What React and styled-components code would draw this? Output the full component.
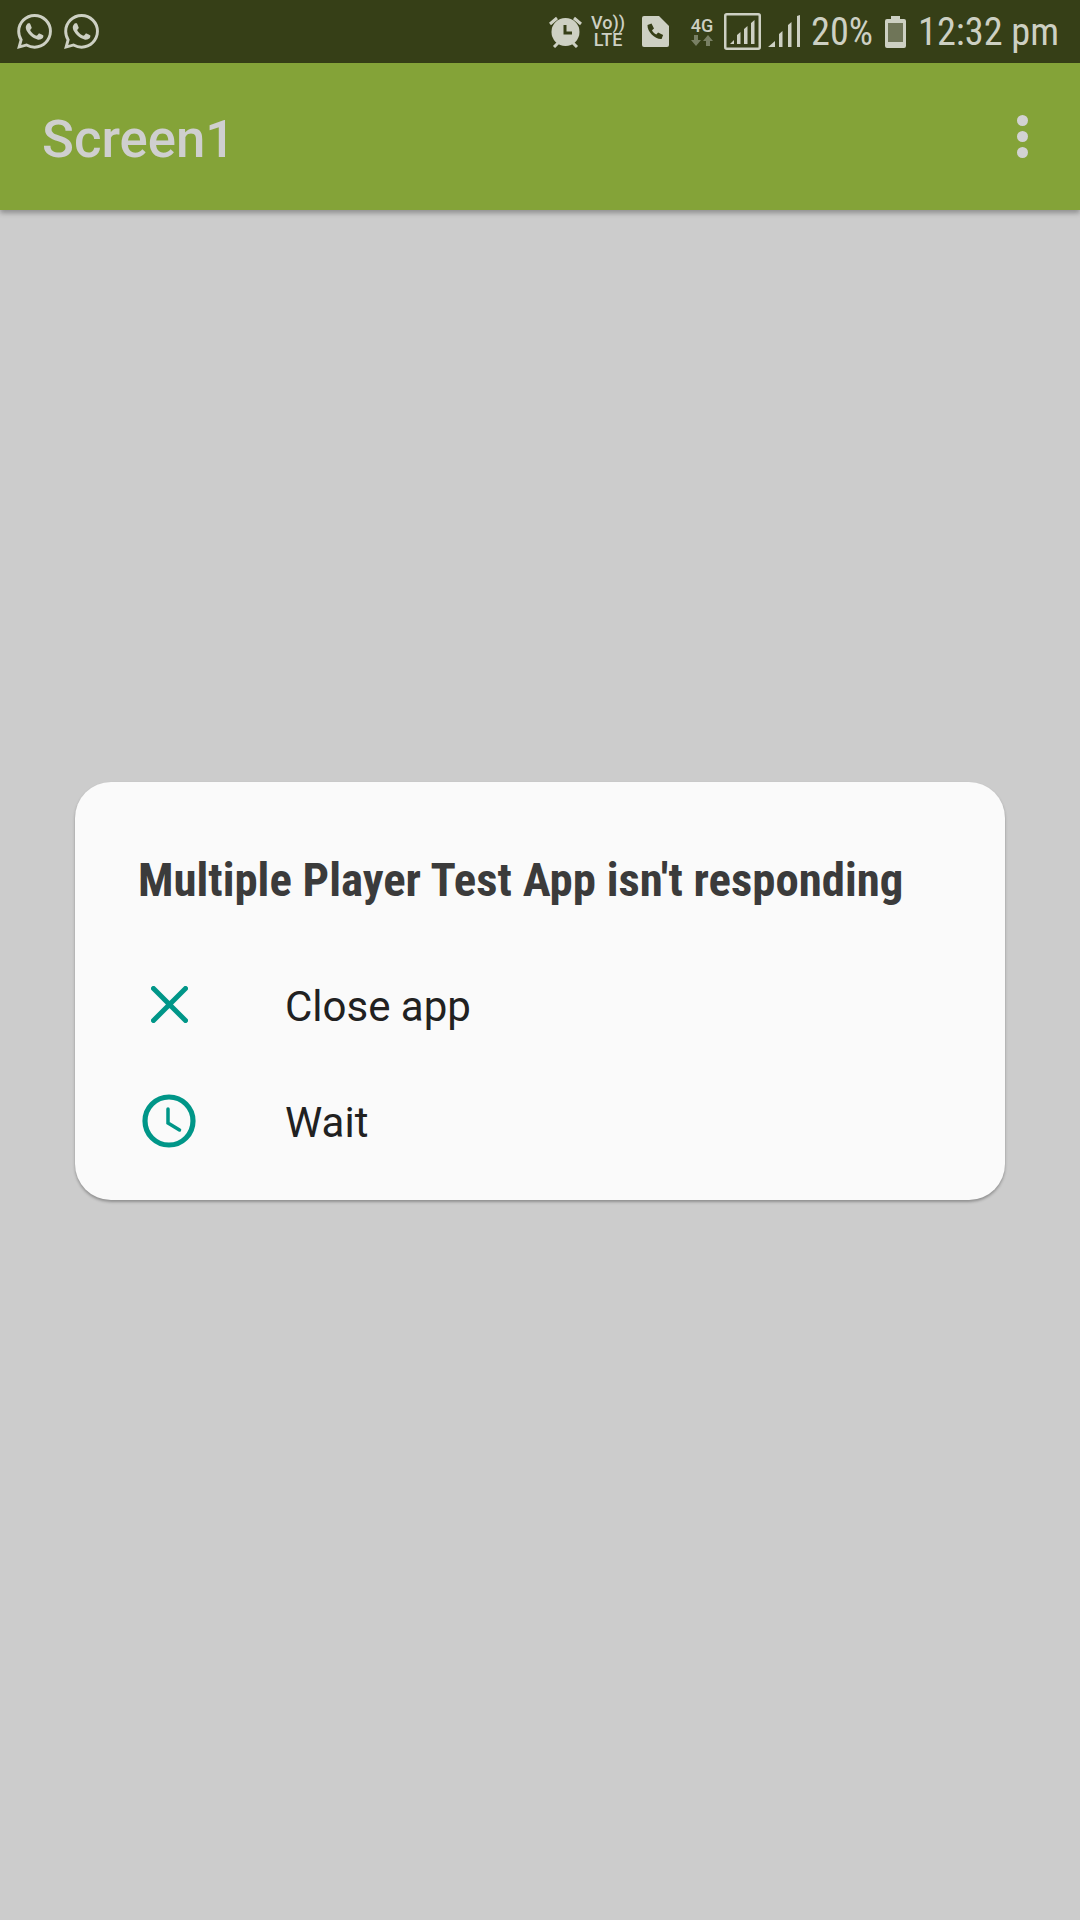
import React from 'react'
import styled, { createGlobalStyle } from 'styled-components'
import { SiWhatsapp } from 'react-icons/si'

const Global = createGlobalStyle`
  html, body {
    margin: 0;
    padding: 0;
    background: #cccccc;
  }
  #root {
    width: 1080px;
    height: 1920px;
  }
`

const Page = styled.div`
  display: flex;
  flex-direction: column;
  width: 1080px;
  height: 1920px;
  overflow: hidden;
  background: #cccccc;
  font-family: Roboto, "Liberation Sans", sans-serif;
`

const StatusBar = styled.div`
  display: flex;
  flex: none;
  align-items: center;
  justify-content: space-between;
  height: 63px;
  padding: 0 21px 0 17px;
  background: #363f17;
  color: #cdd0c3;
`

const StatusGroup = styled.div`
  display: flex;
  align-items: center;
  gap: ${props => props.$gap || 0}px;
`

const StatusItem = styled.div`
  display: flex;
  align-items: center;
  margin-left: ${props => props.$left || 0}px;
`

const WhatsApp = styled(SiWhatsapp)`
  display: block;
  width: 35px;
  height: 35px;
`

const TinyStack = styled.div`
  display: flex;
  flex-direction: column;
  align-items: center;
  gap: 1px;
  width: ${props => props.$width}px;
  font-size: ${props => props.$size}px;
  font-weight: 500;
`

const TinyLine = styled.span`
  display: block;
  line-height: 16px;
  white-space: nowrap;
`

const StatusText = styled.span`
  display: block;
  font-size: 38.300px;
  font-weight: 400;
  font-stretch: 75%;
  line-height: 63px;
  white-space: nowrap;
  width: ${props => props.$width}px;
`

const AppBar = styled.header`
  position: relative;
  z-index: 1;
  display: flex;
  flex: none;
  align-items: center;
  justify-content: space-between;
  box-sizing: border-box;
  height: 147px;
  padding: 0 52px 0 42px;
  background: #84a338;
  box-shadow: 0 3px 5px rgba(0, 0, 0, 0.3);
`

const AppTitle = styled.div`
  margin-top: 5px;
  font-size: 52.700px;
  font-weight: 500;
  color: #cfcfcf;
`

const Overflow = styled.div`
  display: flex;
  flex-direction: column;
  gap: 5px;
`

const Dot = styled.span`
  display: block;
  width: 11px;
  height: 11px;
  border-radius: 50%;
  background: #d2d2d2;
`

const Main = styled.main`
  flex: 1;
  padding: 572px 75px 0;
`

const Dialog = styled.section`
  box-sizing: border-box;
  width: 930px;
  height: 418px;
  padding: 66px 0 0 63px;
  border-radius: 36px;
  background: #fafafa;
  box-shadow: 0 2px 3px rgba(0, 0, 0, 0.3);
`

const DialogTitle = styled.h1`
  margin: 0 0 36px;
  font-size: 46.800px;
  font-weight: 700;
  font-stretch: 75%;
  line-height: 64px;
  color: #3b3b3b;
  white-space: nowrap;
`

const Row = styled.div`
  display: flex;
  align-items: center;
  height: 116px;
`

const IconBox = styled.div`
  display: flex;
  align-items: center;
  justify-content: center;
  flex: none;
  width: 60px;
  margin: 0 86px 3px 1px;
`

const RowLabel = styled.span`
  font-size: 42px;
  color: #212121;
`

const Alarm = () => (
  <svg width="33" height="33" viewBox="0 0 33 33">
    <circle cx="16.500" cy="17" r="14" fill="currentColor" />
    <path d="M1 9l7-6M32 9l-7-6M5 32l4-4M28 32l-4-4" stroke="currentColor" strokeWidth="3" fill="none" />
    <path d="M16 10v8h7" stroke="#363f17" strokeWidth="3" fill="none" />
  </svg>
)

const SimCall = () => (
  <svg width="28" height="31" viewBox="0 0 28 31">
    <path d="M3 0h15l10 10v19a2 2 0 0 1-2 2H3a2 2 0 0 1-2-2V2a2 2 0 0 1 2-2z" fill="currentColor" />
    <path d="M6.500 9l4-1.500 2.500 5-2 1.800c1 2 2.300 3.300 4.300 4.300l1.800-2 5 2.500-1.500 4c-6.500.5-14.500-7.500-14.100-14.100z" fill="#363f17" />
  </svg>
)

const BoxedSignal = () => (
  <svg width="37" height="37" viewBox="0 0 37 37">
    <rect x="1.250" y="1.250" width="34.500" height="34.500" rx="1.500" fill="none" stroke="currentColor" strokeWidth="2.500" />
    <path d="M6 31l4-4v4zM13 31v-9l3.500-3v12zM20 31V16l3.500-3v18zM27 31V10l3.500-3v24z" fill="currentColor" />
  </svg>
)

const Signal = () => (
  <svg width="32" height="33" viewBox="0 0 32 33">
    <path d="M0 32l7-6v6zM11 32V19l3.500-3v16zM20 32V10l3.500-3v25zM29 32V1l3-1v32z" fill="currentColor" />
  </svg>
)

const Arrows = () => (
  <svg width="22" height="11" viewBox="0 0 22 11">
    <path d="M3 0h4v5h3l-5 6-5-6h3zM15 11h4V6h3l-5-6-5 6h3z" fill="currentColor" opacity="0.45" />
  </svg>
)

const Battery = () => (
  <svg width="21" height="32" viewBox="0 0 21 32">
    <path d="M6 0h9v3h4a2 2 0 0 1 2 2v25a2 2 0 0 1-2 2H2a2 2 0 0 1-2-2V5a2 2 0 0 1 2-2h4z" fill="currentColor" />
    <rect x="3" y="7" width="15" height="19" fill="#6f7558" />
  </svg>
)

const CloseIcon = () => (
  <svg width="37" height="37" viewBox="0 0 37 37">
    <path d="M2.500 2.500l32 32M34.500 2.500l-32 32" stroke="#009688" strokeWidth="5" strokeLinecap="round" fill="none" />
  </svg>
)

const ClockIcon = () => (
  <svg width="54" height="54" viewBox="0 0 54 54">
    <circle cx="27" cy="27" r="24" stroke="#009688" strokeWidth="5.200" fill="none" />
    <path d="M26 15v14l11.500 7" stroke="#009688" strokeWidth="3.500" strokeLinecap="round" fill="none" />
  </svg>
)

export default function App() {
  return (
    <Page>
      <Global />
      <StatusBar>
        <StatusGroup $gap={12}>
          <WhatsApp />
          <WhatsApp />
        </StatusGroup>
        <StatusGroup>
          <StatusItem><Alarm /></StatusItem>
          <StatusItem $left={10}>
            <TinyStack $width={32} $size={18}>
              <TinyLine>Vo))</TinyLine>
              <TinyLine>LTE</TinyLine>
            </TinyStack>
          </StatusItem>
          <StatusItem $left={17}><SimCall /></StatusItem>
          <StatusItem $left={20}>
            <TinyStack $width={26} $size={18}>
              <TinyLine>4G</TinyLine>
              <Arrows />
            </TinyStack>
          </StatusItem>
          <StatusItem $left={9}><BoxedSignal /></StatusItem>
          <StatusItem $left={7}><Signal /></StatusItem>
          <StatusItem $left={11}><StatusText $width={61}>20%</StatusText></StatusItem>
          <StatusItem $left={13}><Battery /></StatusItem>
          <StatusItem $left={12}><StatusText $width={141}>12:32 pm</StatusText></StatusItem>
        </StatusGroup>
      </StatusBar>
      <AppBar>
        <AppTitle>Screen1</AppTitle>
        <Overflow>
          <Dot />
          <Dot />
          <Dot />
        </Overflow>
      </AppBar>
      <Main>
        <Dialog>
          <DialogTitle>Multiple Player Test App isn't responding</DialogTitle>
          <Row>
            <IconBox><CloseIcon /></IconBox>
            <RowLabel>Close app</RowLabel>
          </Row>
          <Row>
            <IconBox><ClockIcon /></IconBox>
            <RowLabel>Wait</RowLabel>
          </Row>
        </Dialog>
      </Main>
    </Page>
  )
}
